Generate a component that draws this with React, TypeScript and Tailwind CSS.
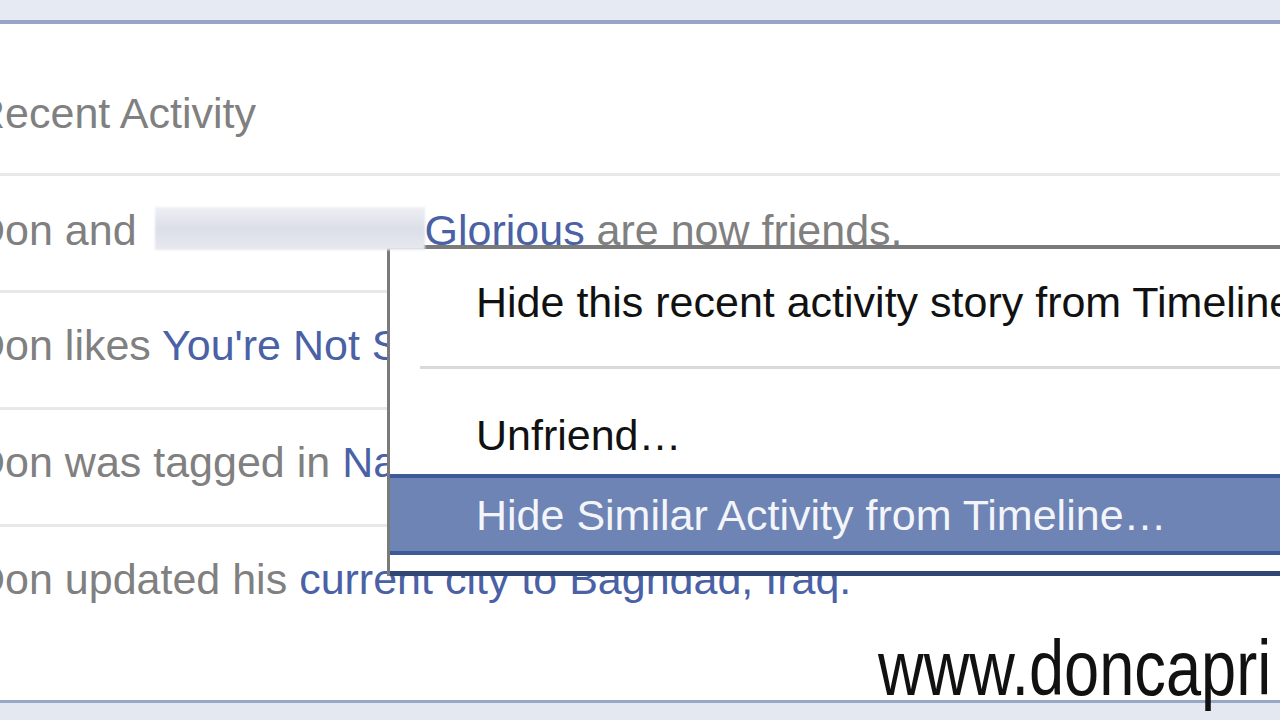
const gray = "text-[#808080]";
const blue = "text-[#4a61a6]";

function Row({ children }: { children: React.ReactNode }) {
  return (
    <div className="h-[114px] pt-[31px]">
      <p className={`-ml-[26px] whitespace-nowrap text-[43px] leading-[43px] ${gray}`}>{children}</p>
    </div>
  );
}

function Sep() {
  return <div className="h-[3px] bg-[#e8e8e8]" />;
}

function ContextMenu() {
  return (
    <div className="absolute left-[387px] top-[245px] z-10 w-[1000px] border-l-[3px] border-t-[4px] border-[#7a7a7a] bg-white text-[43px] leading-[43px]">
      <div className="h-[117px] pt-[32px] pl-[86px] text-[#111111] whitespace-nowrap">
        Hide this recent activity story from Timeline
      </div>
      <div className="ml-[30px] h-[3px] bg-[#d9d9d9]" />
      <div className="h-[105px] pt-[45px] pl-[86px] text-[#111111]">Unfriend…</div>
      <div className="border-y-[4px] border-[#3d5a99] bg-[#6d84b4]">
        <div className="h-[73px] pt-[16px] pl-[86px] text-[#f4f5fa] whitespace-nowrap">
          Hide Similar Activity from Timeline…
        </div>
      </div>
      <div className="h-[16px]" />
      <div className="h-[5px] bg-[#2f4574]" />
    </div>
  );
}

export default function App() {
  return (
    <div className="relative flex h-[720px] w-[1280px] flex-col overflow-hidden bg-white font-['Liberation_Sans',Arial,sans-serif]">
      <div className="h-[20px] bg-[#e6eaf2]" />
      <div className="h-[4px] bg-[#98a5c6]" />

      <div className="h-[149px] pt-[68px]">
        <h2 className={`-ml-[26px] text-[43px] leading-[43px] font-normal ${gray}`}>Recent Activity</h2>
      </div>
      <Sep />

      <Row>
        Don and{" "}
        <span className="relative z-20 ml-[6px] inline-block h-[43px] w-[270px] bg-gradient-to-b from-[#eef0f5] via-[#dcdfe8] to-[#e7e9ef] align-[-5px] blur-[1px]" />
        <span className={blue}>Glorious</span> are now friends.
      </Row>
      <Sep />
      <Row>
        Don likes <span className={blue}>You're Not S</span>
      </Row>
      <Sep />
      <Row>
        Don was tagged in <span className={blue}>Na</span>
      </Row>
      <Sep />
      <div className="flex-1 pt-[31px]">
        <p className={`-ml-[26px] whitespace-nowrap text-[43px] leading-[43px] ${gray}`}>
          Don updated his <span className={blue}>current city to Baghdad, Iraq.</span>
        </p>
      </div>

      <div className="h-[3px] bg-[#98a6c8]" />
      <div className="h-[17px] bg-[#e4e8f1]" />

      <ContextMenu />

      <div className="absolute left-[878px] top-[629px] origin-left scale-x-[0.81] whitespace-nowrap text-[78px] leading-[78px] text-[#111111]">
        www.doncapri
      </div>
    </div>
  );
}
